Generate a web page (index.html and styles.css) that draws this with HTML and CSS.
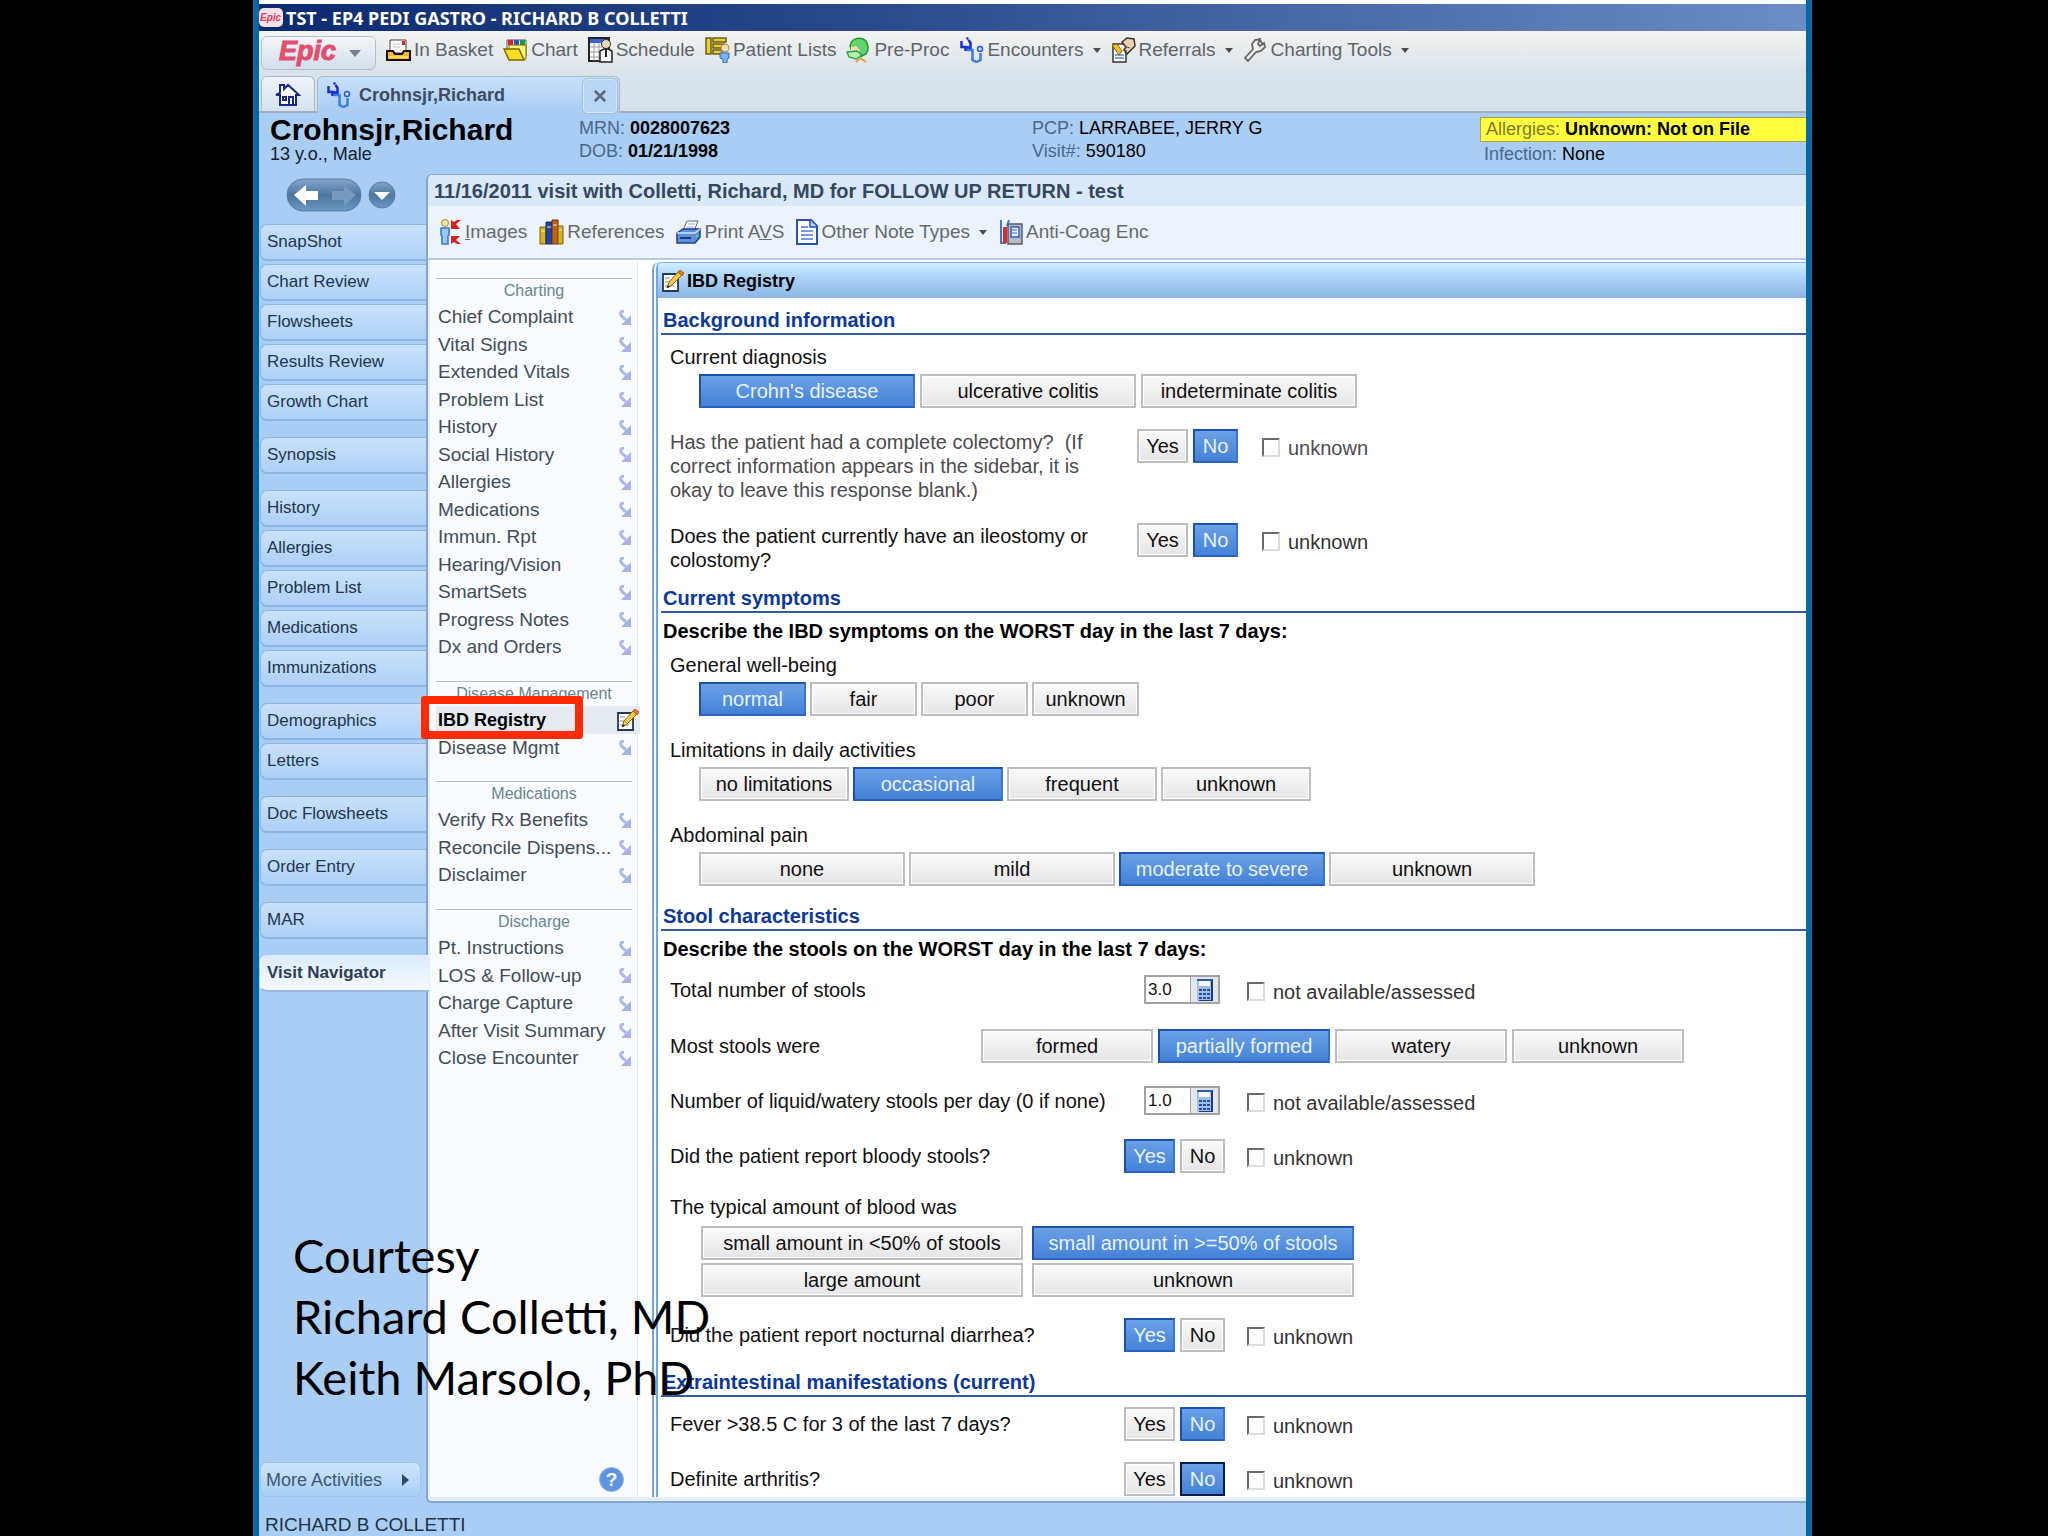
FILE: index.html
```html
<!DOCTYPE html>
<html lang="en">
<head>
<meta charset="utf-8">
<title>TST - EP4 PEDI GASTRO - RICHARD B COLLETTI</title>
<link rel="stylesheet" href="styles.css">
</head>
<body>
<svg class="defs" aria-hidden="true">
  <symbol id="i-arrow" viewBox="0 0 12 15"><path d="M5 1C2 1 1 3 2 5c1 2 3 3 5 5" fill="none" stroke="#a9b9e8" stroke-width="3"/><path d="M12 5V15H2z" fill="#a9b2e6"/></symbol>
  <symbol id="i-steth" viewBox="0 0 24 26"><path d="M7 2L9 1M2 4v6h4v4M6 10l5 1V6L9 3" fill="none" stroke="#1a2fd0" stroke-width="2.500"/><path d="M7 13h6v10l4 2 4-2v-7" fill="none" stroke="#3b7be6" stroke-width="2.500"/><circle cx="20.500" cy="12" r="2.500" fill="#d5e8ff" stroke="#2b55d8" stroke-width="1.500"/></symbol>
  <symbol id="i-note" viewBox="0 0 22 22"><path d="M1 4h15v17H1z" fill="#fff" stroke="#223a55" stroke-width="1.800"/><path d="M3 8h5M3 12h4M3 16h9" stroke="#a8b4c8" stroke-width="1.500"/><path d="M5 18l2-6L17 1l4 3L10 15z" fill="#f4cb45" stroke="#8a6414"/><path d="M16 2l2-2 4 3-2 3z" fill="#ef7a2c" stroke="#a34d12" stroke-width=".800"/><path d="M5 18l1-3 2 2z" fill="#222"/></symbol>
  <symbol id="i-calc" viewBox="0 0 18 24"><path d="M1 1h16v22H1z" fill="#9fbfe6"/><path d="M15 1h2v22H3v-1h12z" fill="#1d3c7c"/><path d="M3 3h11v5H3z" fill="#f3f8ff"/><path d="M1 1h15v2H1z" fill="#2e5fae"/><path d="M3 11h3v2H3zm4 0h3v2H7zm4 0h3v2h-3zM3 15h3v2H3zm4 0h3v2H7zm4 0h3v2h-3zM3 19h3v2H3zm4 0h3v2H7zm4 0h3v2h-3z" fill="#27509c"/></symbol>
</svg>

<div class="frame">
  <header class="titlebar">
    <svg width="24" height="19" viewBox="0 0 24 19" aria-hidden="true"><rect width="24" height="19" rx="5" fill="#f6e3e8"/><text x="1" y="13" class="logo-small">Epic</text></svg>
    <span>TST - EP4 PEDI GASTRO - RICHARD B COLLETTI</span>
  </header>

  <div class="chrome">
    <nav class="menu">
      <button class="epic" type="button"><svg width="64" height="32" viewBox="0 0 64 32" aria-hidden="true"><text x="2" y="23" class="logo">Epic</text></svg><i class="caret caret-lg"></i></button>
      <a href="#"><svg width="25" height="22" viewBox="0 0 25 22"><path d="M4 1h16v13H4z" fill="#fff" stroke="#444"/><path d="M7 5h7M7 8h7" stroke="#bbb"/><path d="M16 2h3v4h-3z" fill="#e22"/><path d="M1 12h6l2 3h7l2-3h6v9H1z" fill="#f7b733" stroke="#111" stroke-width="2"/><path d="M3 18h19" stroke="#fbe04a" stroke-width="2"/></svg>In Basket</a>
      <a href="#"><svg width="25" height="22" viewBox="0 0 25 22"><path d="M4 1h19v16H4z" fill="#fff" stroke="#555"/><path d="M5 1h5v5H5z" fill="#d22"/><path d="M11 1h5v5h-5z" fill="#274fd8"/><path d="M17 1h5v5h-5z" fill="#1e9b3c"/><path d="M6 6h17v14H6z" fill="#fff27a" stroke="#7c6b00"/><path d="M1 10h15l5 11H6z" fill="#f5dd22" stroke="#7c6b00" stroke-width="1.500"/></svg>Chart</a>
      <a href="#"><svg width="25" height="26" viewBox="0 0 25 26"><path d="M1 1h20v23H1z" fill="#fff" stroke="#222" stroke-width="2"/><path d="M2 2h18v4H2z" fill="#3d63d8"/><path d="M2 10h18M2 15h18M2 20h18M6 6v18M11 6v18" stroke="#999"/><circle cx="18" cy="7" r="4.500" fill="#f3d6b5" stroke="#333"/><path d="M12 25V14l4-2h4l4 2v11z" fill="#fff" stroke="#222" stroke-width="1.500"/><path d="M18 12v8" stroke="#222" stroke-width="2"/></svg>Schedule</a>
      <a href="#"><svg width="25" height="26" viewBox="0 0 25 26"><path d="M1 1h5v16H1zM8 1h13v4H8zM8 7h11v4H8zM8 13h9v4H8z" fill="#e8cf2f" stroke="#6b5d10" stroke-width="1.500"/><circle cx="20" cy="11" r="4" fill="#f5dcae" stroke="#b08850"/><path d="M15 16h9v5l-2 1v4h-4v-4l-3-1z" fill="#7db4ef" stroke="#2b6cc4"/></svg>Patient Lists</a>
      <a href="#"><svg width="25" height="26" viewBox="0 0 25 26"><path d="M4 9C5 2 12 0 17 2c6 3 6 11 3 15l-6 3L5 12z" fill="#63d46a" stroke="#1d9a35" stroke-width="1.500"/><path d="M5 10l5-1 4 4-3 6-6-1z" fill="#f8d9b4"/><path d="M1 15l10-1 5 4-6 4-7-2z" fill="#b5efb4" stroke="#2ba545" stroke-width="1.500"/><path d="M10 25l4-4 6 4" fill="none" stroke="#e7a23c" stroke-width="2"/></svg>Pre-Proc</a>
      <a href="#"><svg width="25" height="26"><use href="#i-steth"/></svg>Encounters<i class="caret"></i></a>
      <a href="#"><svg width="25" height="26" viewBox="0 0 25 26"><path d="M2 7h13v18H2z" fill="#fff" stroke="#333" stroke-width="1.500"/><path d="M4 18h9M4 21h9" stroke="#4f87d8" stroke-width="1.500"/><path d="M1 8l5-1 5 7-3 4z" fill="#f2c321" stroke="#8a5d0a"/><path d="M11 5l5-4 7 1 1 7-8 8-3-4 2-3z" fill="#efd0ad" stroke="#333" stroke-width="1.500"/><path d="M13 9l6 2M12 13l4 1" stroke="#555"/></svg>Referrals<i class="caret"></i></a>
      <a href="#"><svg width="25" height="26" viewBox="0 0 25 26"><path d="M12 3l-3 4 1 5-8 9 3 3 8-9 5-1 4-4-1-4-4 3-2-2 2-5zM17 3l3 5" fill="#f4f4f4" stroke="#666" stroke-width="1.800"/></svg>Charting Tools<i class="caret"></i></a>
    </nav>
    <div class="tabs">
      <a class="tab-home" href="#" aria-label="Home"><svg width="26" height="26" viewBox="0 0 26 26"><path d="M5 12V4h4v4l4-4 11 10h-3v10H5V14H1z" fill="#fff" stroke="#15298e" stroke-width="2"/><path d="M8 16h3v3H8zM14 24v-8h4v8" fill="none" stroke="#15298e" stroke-width="2"/></svg></a>
      <div class="tab-patient"><svg width="25" height="26"><use href="#i-steth"/></svg><span>Crohnsjr,Richard</span><button type="button" aria-label="Close tab"><svg width="14" height="14" viewBox="0 0 16 16"><path d="M2 2l12 12M14 2L2 14" stroke="#5b6a7c" stroke-width="3"/></svg></button></div>
    </div>
  </div>

  <section class="patient">
    <div><h1>Crohnsjr,Richard</h1><p>13 y.o., Male</p></div>
    <div class="facts"><p>MRN: <b>0028007623</b></p><p>DOB: <b>01/21/1998</b></p></div>
    <div class="facts"><p>PCP: <span>LARRABEE, JERRY G</span></p><p>Visit#: <span>590180</span></p></div>
    <div class="alerts"><p class="allergy">Allergies: <b>Unknown: Not on File</b></p><p>Infection: <span>None</span></p></div>
  </section>

  <div class="workspace">
    <nav class="activities">
      <div class="history">
        <button class="pill" type="button" aria-label="Back and forward"><svg width="76" height="34" viewBox="0 0 76 34"><defs><linearGradient id="pg" x2="0" y2="1"><stop offset="0" stop-color="#86a5c7"/><stop offset=".5" stop-color="#4d769f"/><stop offset="1" stop-color="#6b97c4"/></linearGradient></defs><rect x="1" y="1" width="74" height="32" rx="16" fill="url(#pg)" stroke="#587da4"/><path d="M8 17L20 7v6h12v9H20v6z" fill="#fff"/><path d="M70 17L58 7v6H46v9h12v6z" fill="#7799bb"/></svg></button>
        <button class="pill" type="button" aria-label="Recent"><svg width="28" height="28" viewBox="0 0 28 28"><circle cx="14" cy="14" r="13" fill="url(#pg)" stroke="#587da4"/><path d="M6 11h16l-8 8z" fill="#fff"/></svg></button>
      </div>
      <ul><li><a href="#">SnapShot</a></li><li><a href="#">Chart Review</a></li><li><a href="#">Flowsheets</a></li><li><a href="#">Results Review</a></li><li><a href="#">Growth Chart</a></li></ul>
      <ul><li><a href="#">Synopsis</a></li></ul>
      <ul><li><a href="#">History</a></li><li><a href="#">Allergies</a></li><li><a href="#">Problem List</a></li><li><a href="#">Medications</a></li><li><a href="#">Immunizations</a></li></ul>
      <ul><li><a href="#">Demographics</a></li><li><a href="#">Letters</a></li></ul>
      <ul><li><a href="#">Doc Flowsheets</a></li></ul>
      <ul><li><a href="#">Order Entry</a></li></ul>
      <ul><li><a href="#">MAR</a></li></ul>
      <ul><li><a class="current" href="#">Visit Navigator</a></li></ul>
      <button class="more" type="button">More Activities<i></i></button>
      <p class="courtesy">Courtesy<br>Richard Colletti, MD<br>Keith Marsolo, PhD</p>
    </nav>

    <main class="visit">
      <h2 class="visit-title">11/16/2011 visit with Colletti, Richard, MD for FOLLOW UP RETURN - test</h2>
      <div class="visit-tools">
        <a href="#"><svg width="22" height="26" viewBox="0 0 22 26"><circle cx="5" cy="4" r="3.500" fill="#f6e3a6" stroke="#a98a35"/><path d="M1 9h8v7l-1 1v8H2v-8l-1-1z" fill="#9fc8f4" stroke="#2f74cc" stroke-width="1.500"/><path d="M21 1l-5 4 4 5h-9V1l3 2 3-2zM21 25l-5-4 4-4h-9v8l3-2 3 2z" fill="#e0201c"/></svg><span><u>I</u>mages</span></a>
        <a href="#"><svg width="25" height="26" viewBox="0 0 25 26"><path d="M1 8h6v17H1z" fill="#d9b21e" stroke="#7b5e0c"/><path d="M7 3h6v22H7z" fill="#2145a8" stroke="#122766"/><path d="M13 1h6v24h-6z" fill="#c0601c" stroke="#6d3009"/><path d="M19 7h5v18h-5z" fill="#d9b21e" stroke="#7b5e0c"/><path d="M2 12h4M8 8h4M14 6h4M20 11h3" stroke="#fff3b0"/></svg><span>References</span></a>
        <a href="#"><svg width="25" height="24" viewBox="0 0 25 24"><path d="M7 10L11 1h11l-4 10z" fill="#fff" stroke="#667"/><path d="M12 4h7M11 7h7" stroke="#9ab"/><path d="M1 13l6-4h17v8l-5 6H1z" fill="#5c8fdc" stroke="#1f3f84" stroke-width="1.500"/><path d="M1 13h18l5-4" fill="none" stroke="#cfe2ff" stroke-width="1.500"/><path d="M4 18h11" stroke="#173a78" stroke-width="2"/><path d="M20 15h2v2h-2z" fill="#4fe05a"/></svg><span>Print A<u>V</u>S</span></a>
        <a href="#"><svg width="22" height="26" viewBox="0 0 22 26"><path d="M1 1h14l6 6v18H1z" fill="#fff" stroke="#2750b8" stroke-width="2"/><path d="M14 1v7h7" fill="#bcd2f7" stroke="#2750b8" stroke-width="1.500"/><path d="M5 8h7M5 12h12M5 16h12M5 20h12" stroke="#4a7ad8" stroke-width="1.500"/></svg><span>Other Note Types</span><i class="caret"></i></a>
        <a href="#"><svg width="24" height="26" viewBox="0 0 24 26"><path d="M2 1v23h5M10 1L8 7" fill="none" stroke="#3c78d8" stroke-width="2"/><path d="M4 8h4v16H4z" fill="#e02a22"/><path d="M9 5h14v20H9z" fill="#b9bcc6" stroke="#555b70" stroke-width="1.500"/><path d="M12 8h8v10h-8z" fill="#e8f1ff" stroke="#2f62c8" stroke-width="1.500"/><path d="M13 11h5M13 14h5" stroke="#2f62c8"/></svg><span>Anti-Coag Enc</span></a>
      </div>

      <div class="columns">
        <nav class="sections">
          <h3>Charting</h3>
          <ul>
            <li><a href="#">Chief Complaint<svg><use href="#i-arrow"/></svg></a></li>
            <li><a href="#">Vital Signs<svg><use href="#i-arrow"/></svg></a></li>
            <li><a href="#">Extended Vitals<svg><use href="#i-arrow"/></svg></a></li>
            <li><a href="#">Problem List<svg><use href="#i-arrow"/></svg></a></li>
            <li><a href="#">History<svg><use href="#i-arrow"/></svg></a></li>
            <li><a href="#">Social History<svg><use href="#i-arrow"/></svg></a></li>
            <li><a href="#">Allergies<svg><use href="#i-arrow"/></svg></a></li>
            <li><a href="#">Medications<svg><use href="#i-arrow"/></svg></a></li>
            <li><a href="#">Immun. Rpt<svg><use href="#i-arrow"/></svg></a></li>
            <li><a href="#">Hearing/Vision<svg><use href="#i-arrow"/></svg></a></li>
            <li><a href="#">SmartSets<svg><use href="#i-arrow"/></svg></a></li>
            <li><a href="#">Progress Notes<svg><use href="#i-arrow"/></svg></a></li>
            <li><a href="#">Dx and Orders<svg><use href="#i-arrow"/></svg></a></li>
          </ul>
          <h3>Disease Management</h3>
          <ul>
            <li class="selected"><a href="#">IBD Registry<svg class="edit"><use href="#i-note"/></svg></a></li>
            <li><a href="#">Disease Mgmt<svg><use href="#i-arrow"/></svg></a></li>
          </ul>
          <h3>Medications</h3>
          <ul>
            <li><a href="#">Verify Rx Benefits<svg><use href="#i-arrow"/></svg></a></li>
            <li><a href="#">Reconcile Dispens...<svg><use href="#i-arrow"/></svg></a></li>
            <li><a href="#">Disclaimer<svg><use href="#i-arrow"/></svg></a></li>
          </ul>
          <h3>Discharge</h3>
          <ul>
            <li><a href="#">Pt. Instructions<svg><use href="#i-arrow"/></svg></a></li>
            <li><a href="#">LOS &amp; Follow-up<svg><use href="#i-arrow"/></svg></a></li>
            <li><a href="#">Charge Capture<svg><use href="#i-arrow"/></svg></a></li>
            <li><a href="#">After Visit Summary<svg><use href="#i-arrow"/></svg></a></li>
            <li><a href="#">Close Encounter<svg><use href="#i-arrow"/></svg></a></li>
          </ul>
          <button class="help" type="button" aria-label="Help">?</button>
        </nav>

        <section class="panel">
          <h2 class="panel-title"><svg width="22" height="22"><use href="#i-note"/></svg>IBD Registry</h2>
          <form class="form">
            <h3>Background information</h3>
            <p class="label">Current diagnosis</p>
            <div class="choices w216"><button type="button" aria-pressed="true">Crohn's disease</button><button type="button">ulcerative colitis</button><button type="button">indeterminate colitis</button></div>
            <div class="row wide muted"><p>Has the patient had a complete colectomy?&nbsp; (If correct information appears in the sidebar, it is okay to leave this response blank.)</p><div class="yesno"><button type="button">Yes</button><button type="button" aria-pressed="true">No</button></div><label><input type="checkbox">unknown</label></div>
            <div class="row wide"><p>Does the patient currently have an ileostomy or colostomy?</p><div class="yesno"><button type="button">Yes</button><button type="button" aria-pressed="true">No</button></div><label><input type="checkbox">unknown</label></div>

            <h3>Current symptoms</h3>
            <h4>Describe the IBD symptoms on the WORST day in the last 7 days:</h4>
            <p class="label">General well-being</p>
            <div class="choices w107"><button type="button" aria-pressed="true">normal</button><button type="button">fair</button><button type="button">poor</button><button type="button">unknown</button></div>
            <p class="label next">Limitations in daily activities</p>
            <div class="choices w150"><button type="button">no limitations</button><button type="button" aria-pressed="true">occasional</button><button type="button">frequent</button><button type="button">unknown</button></div>
            <p class="label next">Abdominal pain</p>
            <div class="choices w206"><button type="button">none</button><button type="button">mild</button><button type="button" aria-pressed="true">moderate to severe</button><button type="button">unknown</button></div>

            <h3>Stool characteristics</h3>
            <h4>Describe the stools on the WORST day in the last 7 days:</h4>
            <div class="row number first"><label for="total">Total number of stools</label><div class="field"><input id="total" type="text" value="3.0"><button type="button" aria-label="Calculator"><svg width="18" height="24"><use href="#i-calc"/></svg></button></div><label class="muted"><input type="checkbox">not available/assessed</label></div>
            <div class="row scale"><p>Most stools were</p><div class="choices w172"><button type="button">formed</button><button type="button" aria-pressed="true">partially formed</button><button type="button">watery</button><button type="button">unknown</button></div></div>
            <div class="row number"><label for="liquid">Number of liquid/watery stools per day (0 if none)</label><div class="field"><input id="liquid" type="text" value="1.0"><button type="button" aria-label="Calculator"><svg width="18" height="24"><use href="#i-calc"/></svg></button></div><label><input type="checkbox">not available/assessed</label></div>
            <div class="row"><p>Did the patient report bloody stools?</p><div class="yesno"><button type="button" aria-pressed="true">Yes</button><button type="button">No</button></div><label><input type="checkbox">unknown</label></div>
            <p class="label next">The typical amount of blood was</p>
            <div class="choices pair"><button type="button">small amount in &lt;50% of stools</button><button type="button" aria-pressed="true">small amount in &gt;=50% of stools</button><button type="button">large amount</button><button type="button">unknown</button></div>
            <div class="row"><p>Did the patient report nocturnal diarrhea?</p><div class="yesno"><button type="button" aria-pressed="true">Yes</button><button type="button">No</button></div><label><input type="checkbox">unknown</label></div>

            <h3>Extraintestinal manifestations (current)</h3>
            <div class="row first"><p>Fever &gt;38.5 C for 3 of the last 7 days?</p><div class="yesno"><button type="button">Yes</button><button type="button" aria-pressed="true">No</button></div><label><input type="checkbox">unknown</label></div>
            <div class="row"><p>Definite arthritis?</p><div class="yesno"><button type="button">Yes</button><button class="focused" type="button" aria-pressed="true">No</button></div><label><input type="checkbox">unknown</label></div>
          </form>
        </section>
      </div>
    </main>
  </div>

  <footer class="status">RICHARD B COLLETTI</footer>
</div>
</body>
</html>
```
FILE: styles.css
```css
*, *::after { box-sizing: border-box; }
body { margin: 0; padding: 0 236px 0 253px; background: #000; font: 20px/24px "Liberation Sans", Arial, sans-serif; color: #111; }
h1, h2, h3, h4, p, ul { margin: 0; padding: 0; }
ul { list-style: none; }
a { color: inherit; text-decoration: none; }
button, input { font: inherit; color: inherit; margin: 0; padding: 0; }
svg { flex: none; display: block; }
.defs { position: absolute; width: 0; height: 0; }

.frame { display: flex; flex-direction: column; min-height: 100vh; border: solid #0768a6; border-width: 0 6px; background: #a9cdf3; }

/* window title */
.titlebar { display: flex; align-items: center; gap: 3px; height: 31px; border-top: 4px solid #fff; background: linear-gradient(90deg, #0b2a70, #2b4a8c 40%, #6b8cc4); color: #fff; font: bold 18px/24px "Noto Sans", sans-serif; white-space: nowrap; }
.logo-small { font: italic bold 10px "Liberation Sans", sans-serif; fill: #e23a5c; }
.logo { font: italic bold 27px "Liberation Sans", sans-serif; fill: #e0506f; stroke: #e0506f; stroke-width: 1px; }

/* application menu and tabs */
.chrome { background: linear-gradient(#f3f4f1, #dbe3ea 50%, #d7e0e7); border-bottom: 2px solid #a5aebc; height: 82px; display: flex; flex-direction: column; justify-content: space-between; }
.menu { display: flex; align-items: center; gap: 10px; padding: 5px 2px 0; height: 39px; font-size: 19px; color: #606469; white-space: nowrap; }
.menu a { display: flex; align-items: center; gap: 3px; height: 26px; margin-bottom: 6px; }
.epic { display: flex; align-items: center; justify-content: center; gap: 8px; width: 115px; height: 34px; border: 1px solid #b4bfcb; border-radius: 6px; background: linear-gradient(#f4f6f8, #d3dfeb); }
.caret { width: 8px; border: solid transparent; border-width: 5px 4px 0; border-top-color: #4a4e54; margin-left: 6px; }
.caret-lg { width: 12px; border-width: 7px 6px 0; border-top-color: #77818d; margin: 0; }
.tabs { display: flex; gap: 2px; padding-left: 2px; height: 37px; margin-bottom: -2px; }
.tab-home, .tab-patient { border: 1px solid #a9b8ca; border-bottom: 0; border-radius: 6px 6px 0 0; }
.tab-home { display: flex; align-items: center; justify-content: center; width: 54px; height: 35px; background: linear-gradient(#eef3f8, #d5e2f0); }
.tab-patient { display: flex; align-items: center; gap: 8px; width: 303px; padding-left: 8px; background: linear-gradient(#c9e0fa, #a9cdf3); font-weight: bold; font-size: 18px; color: #3b4c60; }
.tab-patient button { display: flex; align-items: center; justify-content: center; width: 34px; height: 34px; margin: 2px 2px 0 auto; border: 1px solid #d6e6f8; border-radius: 4px; background: #b9d6f5; box-shadow: 0 0 0 1px #a3bfe0; }

/* patient header */
.patient { display: grid; grid-template-columns: 309px 453px 448px 1fr; height: 61px; padding: 4px 0 0 11px; font-size: 18px; line-height: 22px; color: #12202e; white-space: nowrap; }
.patient h1 { font-size: 30px; line-height: 26px; color: #000; }
.facts, .alerts { color: #49688a; }
.facts p, .patient h1 + p { line-height: 23px; }
.patient b, .patient span { color: #000; }
.allergy { height: 25px; padding-left: 5px; border: 1px solid #a5a34e; border-right: 0; background: #ffff3f; color: #7c7a2c; }
.alerts p + p { padding-left: 4px; line-height: 24px; }

/* left activity tabs */
.workspace { display: flex; flex: 1; }
.activities { position: relative; display: flex; flex-direction: column; gap: 16px; width: 167px; padding-left: 1px; font-size: 17px; color: #21364c; flex: none; }
.history { display: flex; align-items: center; gap: 6px; height: 34px; margin-top: 4px; padding-left: 26px; margin-bottom: -4px; }
.pill { border: 0; background: none; }
.activities ul { display: flex; flex-direction: column; gap: 3px; }
.activities li a { display: block; height: 37px; padding: 0 6px; border: solid #8db5df; border-width: 1px 0 2px 1px; border-radius: 7px 0 0 7px; background: linear-gradient(#c9e1fb, #aed1f6); line-height: 33px; }
.activities li .current { border-color: #e4f0fd #fff #9dbbe0; background: linear-gradient(#dcebfc, #f6faff); font-weight: bold; color: #2c3e52; margin-right: -3px; position: relative; }
.more { display: flex; align-items: center; justify-content: space-between; width: 161px; height: 35px; margin: auto 0 6px; padding: 0 11px 0 5px; border: 1px solid #9cc3ea; border-radius: 7px; background: linear-gradient(#cde5fc, #a9cff5); font-size: 18px; color: #3b5874; }
.more i { border: solid transparent; border-width: 6px 0 6px 7px; border-left-color: #2e4a66; }
.courtesy { position: absolute; left: 34px; bottom: 95px; z-index: 2; font: 47px/61px Lato, sans-serif; color: #000; white-space: nowrap; }

/* visit area */
.visit { display: flex; flex-direction: column; flex: 1; min-width: 0; border: solid #86a6cc; border-width: 1px 0 2px 2px; border-radius: 6px 0 0 6px; background: #fff; box-shadow: inset 3px -4px #e3effb; }
.visit-title { padding: 4px 0 3px 6px; border-radius: 6px 0 0; background: #d9e8fa; font-size: 20px; line-height: 24px; color: #34495c; white-space: nowrap; }
.visit-tools { display: flex; align-items: center; gap: 12px; height: 54px; padding: 0 12px; background: #ecf3fa; border-bottom: 2px solid #b7c9dc; font-size: 19px; color: #66696e; white-space: nowrap; }
.visit-tools a { display: flex; align-items: center; gap: 3px; }
.columns { display: flex; flex: 1; gap: 14px; padding: 2px 0 4px 2px; }

/* visit sections */
.sections { display: flex; flex-direction: column; width: 208px; padding: 16px 5px 5px 6px; border-right: 1px solid #e3e9f0; background: #f9fbfe; font-size: 19px; color: #424d5a; flex: none; white-space: nowrap; }
.sections h3 { height: 25px; border-top: 1px solid #b5bfca; font-weight: normal; font-size: 16px; color: #69858f; text-align: center; }
.sections ul { margin-bottom: 20px; }
.sections li a { display: flex; align-items: center; justify-content: space-between; height: 28px; padding: 0 1px 0 2px; }
.sections li:nth-child(even) a { height: 27px; }
.sections svg { width: 12px; height: 15px; }
.sections .edit { width: 22px; height: 22px; }
.sections .selected { position: relative; margin-right: -8px; background: #e6ebf2; font-size: 18px; font-weight: bold; color: #000; }
.selected::after { content: ""; position: absolute; left: -15px; top: -10px; width: 162px; height: 43px; border: 8px solid #ff2a00; border-radius: 3px; }
.help { width: 25px; height: 25px; margin: auto 8px 0 auto; border: 1px solid #8fb0e6; border-radius: 50%; background: #5f93e4; color: #fff; font-weight: bold; line-height: 20px; }

/* registry panel */
.panel { flex: 1; min-width: 0; border-left: 6px double #6ea5ee; border-radius: 8px 0 0; background: #fff; }
.panel-title { display: flex; align-items: center; gap: 3px; height: 36px; padding-left: 4px; border-top: 1px solid #7fb4ea; border-radius: 4px 0 0; background: linear-gradient(#d3f0ff, #b3daff 30%, #8db3e2); font-size: 18px; color: #000; }
.form { padding: 10px 0 0 3px; }
.form h3 { padding: 0 0 1px 2px; margin-top: 18px; border-bottom: 2px solid #345c9e; font-size: 20px; line-height: 24px; color: #0b389c; }
.form h3:first-child { margin-top: 0; }
.form .wide + h3 { margin-top: 14px; }
.form h4 { margin-top: 6px; padding-left: 2px; font-size: 20px; color: #000; }
.label { margin-top: 10px; padding-left: 9px; }
.next { margin-top: 22px; }
.choices { display: flex; gap: 4px; margin: 5px 0 0 38px; }
.form .choices button, .yesno button { height: 34px; border: 2px solid #bdbcbf; background: linear-gradient(#fafafa, #e6e5e7); box-shadow: inset 0 0 0 1px #fff; text-align: center; line-height: 28px; color: #111; }
.form button[aria-pressed="true"] { border-color: #1d4fae #3a74cc #2b62bf #1d4fae; background: linear-gradient(#6aa0e6, #4482d8); box-shadow: none; color: #e9f3ff; }
.form .yesno .focused[aria-pressed="true"] { border-color: #0a1c4c; }
.w216 { gap: 5px; }
.w216 button { width: 216px; }
.w107 button { width: 107px; }
.w150 button { width: 150px; }
.w206 button { width: 206px; }
.w172 { gap: 5px; }
.w172 button { width: 172px; }
.pair { display: grid; grid-template-columns: 322px 322px; gap: 3px 9px; margin: 7px 0 0 40px; }
.row { display: grid; grid-template-columns: 454px 123px 1fr; min-height: 34px; margin-top: 21px; padding-left: 9px; line-height: 24px; }
.row > p, .row > label:first-child { padding-top: 5px; }
.form .first { margin-top: 10px; }
.form .number.first { margin-top: 12px; }
.wide { grid-template-columns: 467px 125px 1fr; }
.wide > p { padding: 1px 30px 0 0; }
.scale { grid-template-columns: 311px 1fr; margin-top: 22px; }
.row .choices { margin: 0; }
.number { grid-template-columns: 474px 103px 1fr; }
.yesno { display: flex; gap: 5px; }
.yesno button { width: 51px; }
.yesno button + button { width: 45px; }
.row > label:last-child { display: flex; align-items: center; gap: 8px; height: 34px; padding-top: 3px; color: #333; }
.muted, .row.muted label { color: #4c4c50; }
.row input[type="checkbox"] { appearance: none; width: 18px; height: 19px; border: 2px solid #dcdcdc; border-top-color: #6a6a6a; border-left-color: #6a6a6a; background: #fff; }
.field { display: flex; width: 76px; height: 29px; margin-top: 2px; border: 2px solid #a2a2a4; background: #fff; }
.field input { flex: 1; min-width: 0; padding-left: 2px; border: 0; background: none; font-size: 17px; }
.field button { display: flex; align-items: center; justify-content: center; width: 28px; border: 0; border-left: 1px solid #a2a2a4; background: #e3e6ec; }

.status { height: 33px; padding: 10px 6px 0; font-size: 19px; color: #1e3348; }
```
